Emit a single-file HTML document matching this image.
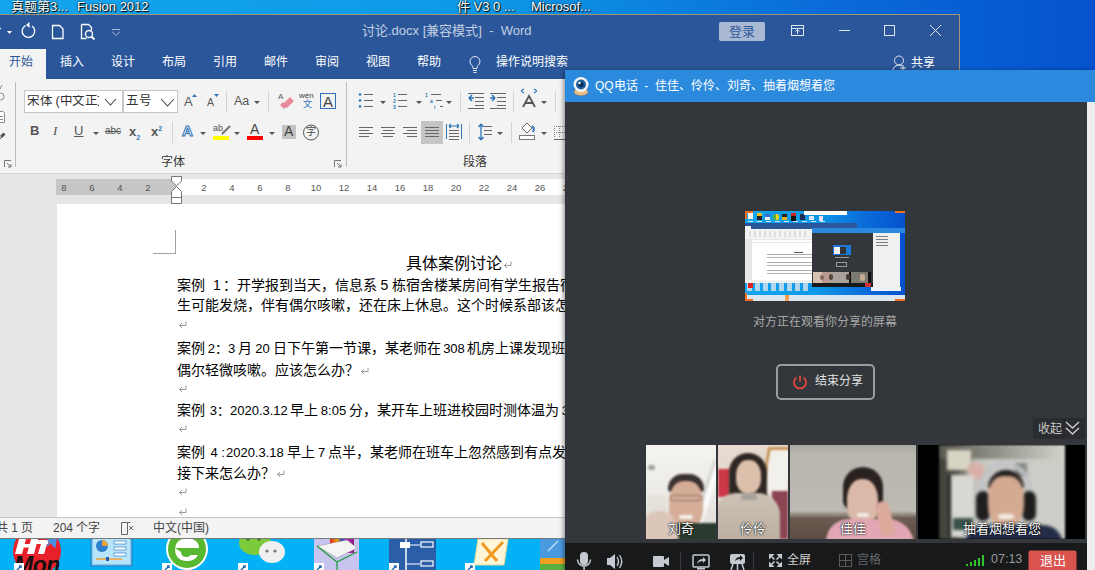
<!DOCTYPE html>
<html lang="zh-CN"><head><meta charset="utf-8">
<style>
*{margin:0;padding:0;box-sizing:border-box}
html,body{width:1095px;height:570px;overflow:hidden}
body{position:relative;font-family:"Liberation Sans",sans-serif;background:linear-gradient(90deg,#14a6ee 0%,#0d98e6 45%,#0a6cd9 75%,#0552cf 100%)}
.a{position:absolute}
.t{position:absolute;white-space:nowrap;line-height:1}
/* desktop labels */
.dl{color:#fff;font-size:13px;text-shadow:0 0 2px #000,1px 1px 1px #000}
/* word */
#word{left:0;top:14px;width:960px;height:525px;background:#e6e6e6;border-top:1px solid #a09478;border-right:1px solid #a09478;border-bottom:1px solid #7a7a7a;overflow:hidden}
#wtitle{left:0;top:0;width:960px;height:65px;background:#2b579a}
.tab{color:#fff;font-size:12px;top:41px}
#ribbon{left:0;top:64px;width:960px;height:95px;background:#f3f3f3;border-bottom:1px solid #d5d5d5}
#ribbon > *{margin-top:-1px}
#ruler{left:56px;top:164px;width:520px;height:16px;background:#fff}
#page{left:57px;top:189px;width:520px;height:400px;background:#fff}
#status{left:0;top:502px;width:960px;height:21px;background:#f3f3f3;border-top:1px solid #c6c6c6}
.doc{font-size:14px;color:#000}
.rt{font-size:11px;color:#9a9a9a}
.doc b{display:inline-block;font-weight:normal;text-align:center;font-size:13px;vertical-align:baseline}
/* qq */
#qq{left:565px;top:70px;width:530px;height:500px;background:#eeeeee;box-shadow:-2px 0 4px rgba(0,0,0,.35)}
#qqt{left:0;top:0;width:530px;height:32px;background:#2b8ade}
.vid{overflow:hidden}
.vid > div, .vid > div > div{filter:blur(1.2px)}
.vn{font-size:13px;color:#fff;text-shadow:0 0 2px #000,0 0 1px #000}
#qqb{left:0;top:32px;width:522px;height:468px;background:#33363a}
i{display:inline-block;width:1em;font-style:normal;overflow:visible}
.ret{display:inline-block;vertical-align:baseline;margin-left:1px}
</style></head><body>
<!-- desktop labels -->
<div class="t dl" style="left:11px;top:0px"><i>真</i><i>题</i><i>第</i>3...</div>
<div class="t dl" style="left:77px;top:0px">Fusion 2012</div>
<div class="t dl" style="left:457px;top:0px"><i>件</i> V3 0 ...</div>
<div class="t dl" style="left:531px;top:0px">Microsof...</div>

<!-- desktop bottom icons -->
<div class="a" style="left:0;top:538px;width:565px;height:32px;background:#03b2f6"></div>
<svg class="a" style="left:0;top:539px" width="565" height="32">
  <!-- HTMon -->
  <circle cx="37" cy="12" r="24" fill="#e8202a"/>
  <path d="M19 0h7l-4 15h-7z M31 0h7l-4 15h-7z M21 5h12l-1 3.5h-12z M37 1h12l-1 4h-12z M41 5h6l-3 10h-6z" fill="#fff"/>
  <path d="M48 1l8-1-1 8z M47 7l5-5" fill="#4a90e0" stroke="#4a90e0" stroke-width="1.5"/>
  <text x="14" y="34" font-family="Liberation Sans" font-weight="bold" font-style="italic" font-size="23" fill="#111" letter-spacing="-0.5">Mon</text>
  <rect x="14" y="24" width="10" height="8" fill="#fff"/><path d="M17 31l4-4M19 27h2v2" stroke="#2a6ab0" stroke-width="1.5" fill="none"/>
  <!-- presentation -->
  <rect x="91" y="0" width="41" height="27" fill="#7ec8f0" stroke="#2a70b8"/>
  <rect x="93" y="0" width="37" height="25" fill="#b8e4fa"/>
  <circle cx="102" cy="7" r="6" fill="#2d7fd0"/><path d="M102 7v-6a6 6 0 0 1 6 6z" fill="#f0a030"/>
  <rect x="114" y="2" width="12" height="3" fill="#fff" stroke="#4a90d0" stroke-width=".8"/><rect x="114" y="8" width="12" height="3" fill="#fff" stroke="#4a90d0" stroke-width=".8"/><rect x="114" y="14" width="12" height="3" fill="#fff" stroke="#4a90d0" stroke-width=".8"/>
  <path d="M96 20h26" stroke="#f0a030" stroke-width="1.5"/><rect x="106" y="18" width="3" height="4" fill="#2060b0"/>
  <!-- 360 e -->
  <circle cx="187" cy="10" r="21" fill="#fff"/>
  <circle cx="187" cy="10" r="19" fill="#58b830"/>
  <path d="M175 9h24q0-9-12-10q-12 1-12 12q1 11 12 11q8 0 11-6h-7q-2 2-4 2q-6 0-6-5z" fill="#fff"/>
  <rect x="162" y="24" width="10" height="8" fill="#fff"/><path d="M165 31l4-4M167 27h2v2" stroke="#2a6ab0" stroke-width="1.5" fill="none"/>
  <!-- wechat -->
  <ellipse cx="255" cy="4" rx="16" ry="12" fill="#7ccb3a"/>
  <ellipse cx="272" cy="13" rx="13" ry="11" fill="#f0f0f0"/>
  <circle cx="248" cy="0" r="1.8" fill="#3a6a20"/><circle cx="259" cy="0" r="1.8" fill="#3a6a20"/>
  <circle cx="267" cy="12" r="1.6" fill="#777"/><circle cx="275" cy="12" r="1.6" fill="#777"/>
  <rect x="238" y="24" width="10" height="8" fill="#fff"/><path d="M241 31l4-4M243 27h2v2" stroke="#2a6ab0" stroke-width="1.5" fill="none"/>
  <!-- book -->
  <rect x="314" y="0" width="45" height="32" fill="#c8c4f0"/>
  <rect x="330" y="0" width="24" height="14" fill="url(#strp)"/>
  <path d="M317 7l20 12l20-10l-10-8z" fill="#f4f4f4" stroke="#888" stroke-width=".5"/>
  <path d="M317 7l20 16v9M337 23l20-10" stroke="#1a9a30" stroke-width="1.2" fill="none"/>
  <rect x="314" y="24" width="10" height="8" fill="#fff"/><path d="M317 31l4-4M319 27h2v2" stroke="#2a6ab0" stroke-width="1.5" fill="none"/>
  <!-- diagram -->
  <rect x="389" y="0" width="47" height="32" fill="#2a5ea8"/>
  <path d="M406 0v32" stroke="#fff" stroke-width="1.5"/>
  <rect x="400" y="3" width="10" height="6" fill="#fff"/><path d="M410 6h10M406 25h14" stroke="#fff" stroke-width="1.2"/>
  <rect x="421" y="3" width="12" height="5" fill="none" stroke="#fff" stroke-width="1.2"/><rect x="421" y="22" width="12" height="5" fill="none" stroke="#fff" stroke-width="1.2"/>
  <rect x="389" y="24" width="10" height="8" fill="#fff"/><path d="M392 31l4-4M394 27h2v2" stroke="#2a6ab0" stroke-width="1.5" fill="none"/>
  <!-- xmanager -->
  <path d="M478 0h30l-4 26h-30z" fill="#fdf6d8" stroke="#e8d890"/>
  <path d="M482 4l15 18M503 3l-18 19" stroke="#f09a20" stroke-width="3"/>
  <rect x="465" y="24" width="10" height="8" fill="#fff"/><path d="M468 31l4-4M470 27h2v2" stroke="#2a6ab0" stroke-width="1.5" fill="none"/>
  <!-- layered -->
  <path d="M540 24h25v8h-25z" fill="#5ab040"/><path d="M540 18h25v7h-25z" fill="#f0a020"/><path d="M540 0h25v19h-25z" fill="#4a9ae0"/>
  <path d="M548 12l10-10" stroke="#b8e0fa" stroke-width="1.5"/>
  <defs><linearGradient id="strp" x1="0" x2="1"><stop offset="0" stop-color="#e02020"/><stop offset=".3" stop-color="#f0a000"/><stop offset=".5" stop-color="#2040d0"/><stop offset=".7" stop-color="#c020c0"/><stop offset="1" stop-color="#8a2080"/></linearGradient></defs>
</svg>
<div id="word" class="a">
  <div id="wtitle" class="a">
    <svg class="a" style="left:0;top:0" width="960" height="65">
      <g fill="none" stroke="#fff" stroke-width="1.3">
        <path d="M-2 16.5 a3 3 0 0 1 3 -3"/>
        <path d="M32 11 A6.3 6.3 0 1 1 25.5 10.6"/>
        <path d="M52.5 10.5h7l3.5 3.5v9.5h-10.5z"/>
        <path d="M81.5 9.5h7l3 3v3M81.5 9.5v14h5"/>
        <circle cx="89" cy="19" r="3.5"/><path d="M91.5 21.5l3 3" stroke-width="1.8"/>
      </g>
      <path d="M7 16h5l-2.5 3z" fill="#fff"/>
      <path d="M26 10l3.5-3v6z" fill="#fff"/>
      <path d="M112 14.5h8M112 16.5l4 4l4-4" fill="none" stroke="#a8b8d4" stroke-width="1"/>
      <g fill="none" stroke="#dfe6f0" stroke-width="1">
        <rect x="791.5" y="10.5" width="12" height="10"/><path d="M791.5 13.5h12M797.5 19v-4M795.5 16.5l2-2l2 2"/>
        <path d="M839 15.5h11"/>
        <rect x="884.5" y="10.5" width="10" height="10"/>
        <path d="M930 10l11 11M941 10l-11 11"/>
        <circle cx="899" cy="45.5" r="4.5"/><path d="M892.5 56q1-5.5 6.5-6q2 0 3.5 1M903 50v6M900 53h6"/>
        <path d="M472 50.5a5 5 0 1 1 6 0q-1 1-1 3h-4q0-2-1-3zM473 55.5h4M473.5 57.5h3"/>
      </g>
    </svg>
    <div class="t" style="left:362px;top:9px;font-size:13px;color:#c3cfe2"><i>讨</i><i>论</i>.docx [<i>兼</i><i>容</i><i>模</i><i>式</i>]&nbsp; - &nbsp;Word</div>
    <div class="a" style="left:719px;top:7px;width:46px;height:19px;background:#abbad4;border-radius:2px"></div>
    <div class="t" style="left:729px;top:10px;font-size:13px;color:#2b579a"><i>登</i><i>录</i></div>
    <div class="a" style="left:0;top:34px;width:46px;height:31px;background:#f3f3f3"></div>
    <div class="t tab" style="left:9px;color:#2b579a"><i>开</i><i>始</i></div>
    <div class="t tab" style="left:60px"><i>插</i><i>入</i></div>
    <div class="t tab" style="left:111px"><i>设</i><i>计</i></div>
    <div class="t tab" style="left:162px"><i>布</i><i>局</i></div>
    <div class="t tab" style="left:213px"><i>引</i><i>用</i></div>
    <div class="t tab" style="left:264px"><i>邮</i><i>件</i></div>
    <div class="t tab" style="left:315px"><i>审</i><i>阅</i></div>
    <div class="t tab" style="left:366px"><i>视</i><i>图</i></div>
    <div class="t tab" style="left:417px"><i>帮</i><i>助</i></div>
    <div class="t tab" style="left:496px"><i>操</i><i>作</i><i>说</i><i>明</i><i>搜</i><i>索</i></div>
    <div class="t tab" style="left:911px;top:42px"><i>共</i><i>享</i></div>
  </div>
  <div id="ribbon" class="a">
    <svg class="a" style="left:0;top:0" width="960" height="94">
      <g fill="#d3d3d3"><rect x="15" y="4" width="1" height="85" fill="#bcbcbc"/><rect x="346" y="4" width="1" height="85" fill="#bcbcbc"/><rect x="226" y="13" width="1" height="21"/><rect x="268" y="13" width="1" height="21"/><rect x="172" y="44" width="1" height="21"/><rect x="460" y="13" width="1" height="21"/><rect x="513" y="13" width="1" height="21"/><rect x="555" y="13" width="1" height="21"/><rect x="469" y="44" width="1" height="21"/><rect x="511" y="44" width="1" height="21"/></g>
      <!-- left clipboard partial icons -->
      <g stroke="#8a8a8a" fill="none" stroke-width="1"><circle cx="0.5" cy="18.5" r="3.5"/><path d="M0 11 L2 7"/><path d="M-3 33.5h6l1.5 1.5v9.5h-7.5z" fill="#fff"/><path d="M0 38.5h3M0 41.5h3"/></g>
      <path d="M0 58 L3.5 54.5 L5.5 56.5 L2 60 Z" fill="#555"/><path d="M0 61 L2 59" stroke="#555"/>
      <!-- font box -->
      <rect x="24.5" y="12.5" width="98" height="22" fill="#fff" stroke="#c6c6c6"/>
      <rect x="123.5" y="12.5" width="54" height="22" fill="#fff" stroke="#c6c6c6"/>
      <path d="M105 21 L110.5 27 L116 21" fill="none" stroke="#444" stroke-width="1.1"/>
      <path d="M161 21 L167.5 28 L174 21" fill="none" stroke="#444" stroke-width="1.1"/>
      <!-- grow/shrink -->
      <path d="M192 19 L194.5 16 L197 19Z M214 16 L219 16 L216.5 19Z" fill="#2e75b6"/>
      <!-- arrows -->
      <g fill="#555"><path d="M254 23h6l-3 3z"/><path d="M93 54h6l-3 3z"/><path d="M200 54h6l-3 3z"/><path d="M234 54h6l-3 3z"/><path d="M269 54h6l-3 3z"/>
      <path d="M380 23h6l-3 3z"/><path d="M416 23h6l-3 3z"/><path d="M446 23h6l-3 3z"/><path d="M541 23h6l-3 3z"/><path d="M497 54h6l-3 3z"/><path d="M541 54h6l-3 3z"/></g>
      <!-- eraser -->
      <path d="M283 26 L290 19 L294 23 L287 30 Z" fill="#e8899a"/><path d="M280 27 L283 24 L287 28 L284 31Z" fill="#e8899a"/>
      <!-- boxed A -->
      <rect x="320.5" y="15.5" width="15" height="15" fill="none" stroke="#2e6fba"/>
      <!-- highlight / font color bars -->
      <rect x="213" y="58" width="16" height="4" fill="#ffff00"/>
      <path d="M222 56 L230 48" stroke="#777" stroke-width="2.2"/>
      <rect x="247" y="58" width="16" height="4" fill="#ff0000"/>
      <rect x="282" y="47" width="14" height="14" fill="#c3c3c3"/>
      <circle cx="311" cy="54.5" r="7.5" fill="none" stroke="#555"/>
      <!-- bullets -->
      <g fill="#2e75b6"><circle cx="360" cy="16.5" r="1.3"/><circle cx="360" cy="22.5" r="1.3"/><circle cx="360" cy="28.5" r="1.3"/></g>
      <g stroke="#666" stroke-width="1"><path d="M364 16.5h9M364 22.5h9M364 28.5h9"/><path d="M398 16.5h9M398 22.5h9M398 28.5h9"/><path d="M431 16.5h10M436 22.5h6M440 28.5h3"/></g>
      <g fill="#2e75b6" font-size="5" font-family="Liberation Sans" font-weight="bold"><text x="393" y="19">1</text><text x="393" y="25">2</text><text x="393" y="31">3</text><text x="425" y="19">1</text><text x="430" y="25">a</text><text x="434" y="31">i</text></g>
      <!-- indent -->
      <g stroke="#666" stroke-width="1"><path d="M468 15.5h16M475 19.5h9M475 23.5h9M475 27.5h9M468 30.5h16"/><path d="M490 15.5h16M497 19.5h9M497 23.5h9M497 27.5h9M490 30.5h16"/></g>
      <path d="M474 20h-5M469 20l3-3M469 20l3 3" stroke="#2e75b6" stroke-width="1.6" fill="none"/>
      <path d="M490 20h5M495 20l-3-3M495 20l-3 3" stroke="#2e75b6" stroke-width="1.6" fill="none"/>
      <!-- asian layout -->
      <path d="M523 29 L529 18 L535 29 M525 25h8" stroke="#555" stroke-width="1.8" fill="none"/>
      <path d="M521 13 l3-2 M521 13 l3 2 M537 13 l-3-2 M537 13 l-3 2" stroke="#2e75b6" stroke-width="1.2" fill="none"/>
      <!-- align -->
      <rect x="421" y="43" width="22" height="23" fill="#c5c5c5"/>
      <g stroke="#666" stroke-width="1">
        <path d="M359 49.5h14M359 52.5h10M359 55.5h14M359 58.5h10"/>
        <path d="M381 49.5h14M383 52.5h10M381 55.5h14M383 58.5h10"/>
        <path d="M403 49.5h14M407 52.5h10M403 55.5h14M407 58.5h10"/>
        <path d="M425 49.5h14M425 52.5h14M425 55.5h14M425 58.5h14"/>
        <path d="M449 52.5h10M449 55.5h10M449 58.5h10M449 61.5h10"/>
        <path d="M484 48.5h8M484 52.5h8M484 56.5h8"/>
      </g>
      <path d="M446.5 46v15M461.5 46v15" stroke="#2e75b6" stroke-width="1"/>
      <path d="M449 48h10M449 48l2-2M449 48l2 2M459 48l-2-2M459 48l-2 2" stroke="#2e75b6" stroke-width="1.2" fill="none"/>
      <path d="M481 46v16M481 46l-2.5 3M481 46l2.5 3M481 62l-2.5-3M481 62l2.5-3" stroke="#2e75b6" stroke-width="1.3" fill="none"/>
      <!-- shading -->
      <rect x="519.5" y="57.5" width="15" height="4" fill="#fff" stroke="#777"/>
      <path d="M522 50 L527 45 L532 50 L527 55 Z" fill="#fff" stroke="#666"/>
      <path d="M532 48 q3 2 1 6" stroke="#2e75b6" stroke-width="2" fill="none"/>
      <path d="M554 61.5h11" stroke="#666"/>
      <path d="M554.5 48v12M559.5 48v12M554 48.5h11M554 54.5h11" stroke="#888" stroke-dasharray="1 1" fill="none"/>
      <!-- dialog launchers -->
      <path d="M4.5 89V82.5H11M7 85l4 4M11 86v3H8" stroke="#777" fill="none"/>
      <path d="M334.5 89V82.5H341M337 85l4 4M341 86v3H338" stroke="#777" fill="none"/>
    </svg>
    <div class="t" style="left:27px;top:17px;width:72px;overflow:hidden;font-size:12.5px;color:#333"><i>宋</i><i>体</i> (<i>中</i><i>文</i><i>正</i><i>文</i></div>
    <div class="t" style="left:126px;top:17px;font-size:12.5px;color:#333"><i>五</i><i>号</i></div>
    <div class="t" style="left:184px;top:17px;font-size:13px;color:#555">A</div>
    <div class="t" style="left:207px;top:19px;font-size:10.5px;color:#555">A</div>
    <div class="t" style="left:234px;top:17px;font-size:12.5px;color:#555">Aa</div>
    <div class="t" style="left:278px;top:15px;font-size:8px;color:#555">A</div>
    <div class="t" style="left:299px;top:14px;font-size:8px;color:#444">wén</div>
    <div class="t" style="left:303px;top:22px;font-size:9px;color:#2e75b6"><i>文</i></div>
    <div class="t" style="left:323px;top:16px;font-size:15px;color:#444">A</div>
    <div class="t" style="left:30px;top:46px;font-size:13px;color:#555;font-weight:bold">B</div>
    <div class="t" style="left:53px;top:46px;font-size:13px;color:#555;font-style:italic;font-family:'Liberation Serif'">I</div>
    <div class="t" style="left:74px;top:46px;font-size:13px;color:#555;text-decoration:underline">U</div>
    <div class="t" style="left:105px;top:48px;font-size:10px;color:#555;text-decoration:line-through">abc</div>
    <div class="t" style="left:129px;top:47px;font-size:13px;color:#555;font-weight:bold">x<sub style="font-size:7px;color:#2e75b6">2</sub></div>
    <div class="t" style="left:151px;top:47px;font-size:13px;color:#555;font-weight:bold">x<sup style="font-size:7px;color:#2e75b6">2</sup></div>
    <div class="t" style="left:182px;top:45px;font-size:15px;color:#fff;-webkit-text-stroke:1px #2e75b6;font-weight:bold">A</div>
    <div class="t" style="left:213px;top:46px;font-size:9px;color:#555">ab</div>
    <div class="t" style="left:250px;top:44px;font-size:14px;color:#444">A</div>
    <div class="t" style="left:284px;top:46px;font-size:14px;color:#444">A</div>
    <div class="t" style="left:306px;top:49px;font-size:10px;color:#444"><i>字</i></div>
    <div class="t" style="left:161px;top:78px;font-size:12px;color:#333"><i>字</i><i>体</i></div>
    <div class="t" style="left:463px;top:78px;font-size:12px;color:#333"><i>段</i><i>落</i></div>
  </div>
  <div id="ruler" class="a" style="left:56px;top:164px;width:520px;height:16px;background:#fff">
    <div class="a" style="left:0;top:0;width:120px;height:16px;background:#c6c6c6"></div>
    <svg class="a" style="left:0;top:-4px" width="520" height="30">
      <g font-family="Liberation Sans" font-size="9.5" fill="#555" text-anchor="middle">
        <text x="8" y="16">8</text><text x="36" y="16">6</text><text x="64" y="16">4</text><text x="92" y="16">2</text>
        <text x="148" y="16">2</text><text x="176" y="16">4</text><text x="204" y="16">6</text><text x="232" y="16">8</text><text x="260" y="16">10</text><text x="288" y="16">12</text><text x="316" y="16">14</text><text x="344" y="16">16</text><text x="372" y="16">18</text><text x="400" y="16">20</text><text x="428" y="16">22</text><text x="456" y="16">24</text><text x="484" y="16">26</text><text x="512" y="16">28</text>
      </g>
      <path d="M115.5 1.5h10v4.5l-5 5l-5-5z" fill="#fff" stroke="#777"/>
      <path d="M120.5 11.5l5 5v12h-10v-12z" fill="#fff" stroke="#777"/>
      <path d="M115.5 22.5h10" stroke="#777"/>
    </svg>
  </div>
  <div id="page" class="a" style="left:57px;top:189px;width:520px;height:320px;background:#fff">
    <div class="a" style="left:118px;top:26px;width:1px;height:24px;background:#a0a0a0"></div>
    <div class="a" style="left:96px;top:49px;width:23px;height:1px;background:#a0a0a0"></div>
    <div class="t doc" style="left:120px;top:74px"><i>案</i><i>例</i><b style="width:18px;text-align:left;padding-left:8px;font-size:14px">1</b><i>：</i><i>开</i><i>学</i><i>报</i><i>到</i><i>当</i><i>天</i><i>，</i><i>信</i><i>息</i><i>系</i><b style="width:15px;font-size:14px">5</b><i>栋</i><i>宿</i><i>舍</i><i>楼</i><i>某</i><i>房</i><i>间</i><i>有</i><i>学</i><i>生</i><i>报</i><i>告</i><i>宿</i><i>舍</i><i>有</i><i>学</i><i>生</i></div>
    <div class="t doc" style="left:120px;top:94px"><i>生</i><i>可</i><i>能</i><i>发</i><i>烧</i><i>，</i><i>伴</i><i>有</i><i>偶</i><i>尔</i><i>咳</i><i>嗽</i><i>，</i><i>还</i><i>在</i><i>床</i><i>上</i><i>休</i><i>息</i><i>。</i><i>这</i><i>个</i><i>时</i><i>候</i><i>系</i><i>部</i><i>该</i><i>怎</i><i>么</i><i>办</i></div>
    <div class="t doc" style="left:120px;top:137px"><i>案</i><i>例</i><b style="width:33px">2<i>：</i>3</b><i>月</i><b style="width:21px">20</b><i>日</i><i>下</i><i>午</i><i>第</i><i>一</i><i>节</i><i>课</i><i>，</i><i>某</i><i>老</i><i>师</i><i>在</i><b style="width:26px">308</b><i>机</i><i>房</i><i>上</i><i>课</i><i>发</i><i>现</i><i>班</i><i>上</i></div>
    <div class="t doc" style="left:120px;top:159px"><i>偶</i><i>尔</i><i>轻</i><i>微</i><i>咳</i><i>嗽</i><i>。</i><i>应</i><i>该</i><i>怎</i><i>么</i><i>办</i><i>？</i><span class="rt"><svg class="ret" width="9" height="8" viewBox="0 0 9 8"><path d="M8 0.5v4H1.5M1.5 4.5l2.5-2.5M1.5 4.5l2.5 2.5" fill="none" stroke="currentColor" stroke-width="1"/></svg></span></div>
    <div class="t doc" style="left:120px;top:199px"><i>案</i><i>例</i><b style="width:25px;text-align:right">3<i>：</i></b><b style="width:56px">2020.3.12</b><b style="width:4px"></b><i>早</i><i>上</i><b style="width:31px">8:05</b><i>分</i><i>，</i><i>某</i><i>开</i><i>车</i><i>上</i><i>班</i><i>进</i><i>校</i><i>园</i><i>时</i><i>测</i><i>体</i><i>温</i><i>为</i><b style="width:20px">37</b></div>
    <div class="t doc" style="left:120px;top:241px"><i>案</i><i>例</i><b style="width:21px;text-align:right;padding-right:1px">4 :</b><b style="width:56px">2020.3.18</b><b style="width:5px"></b><i>早</i><i>上</i><b style="width:13px">7</b><i>点</i><i>半</i><i>，</i><i>某</i><i>老</i><i>师</i><i>在</i><i>班</i><i>车</i><i>上</i><i>忽</i><i>然</i><i>感</i><i>到</i><i>有</i><i>点</i><i>发</i><i>烧</i></div>
    <div class="t doc" style="left:120px;top:262px"><i>接</i><i>下</i><i>来</i><i>怎</i><i>么</i><i>办</i><i>？</i><span class="rt"><svg class="ret" width="9" height="8" viewBox="0 0 9 8"><path d="M8 0.5v4H1.5M1.5 4.5l2.5-2.5M1.5 4.5l2.5 2.5" fill="none" stroke="currentColor" stroke-width="1"/></svg></span></div>
    <div class="t rt" style="left:120px;top:116px"><svg class="ret" width="9" height="8" viewBox="0 0 9 8"><path d="M8 0.5v4H1.5M1.5 4.5l2.5-2.5M1.5 4.5l2.5 2.5" fill="none" stroke="currentColor" stroke-width="1"/></svg></div>
    <div class="t rt" style="left:120px;top:180px"><svg class="ret" width="9" height="8" viewBox="0 0 9 8"><path d="M8 0.5v4H1.5M1.5 4.5l2.5-2.5M1.5 4.5l2.5 2.5" fill="none" stroke="currentColor" stroke-width="1"/></svg></div>
    <div class="t rt" style="left:120px;top:220px"><svg class="ret" width="9" height="8" viewBox="0 0 9 8"><path d="M8 0.5v4H1.5M1.5 4.5l2.5-2.5M1.5 4.5l2.5 2.5" fill="none" stroke="currentColor" stroke-width="1"/></svg></div>
    <div class="t rt" style="left:120px;top:283px"><svg class="ret" width="9" height="8" viewBox="0 0 9 8"><path d="M8 0.5v4H1.5M1.5 4.5l2.5-2.5M1.5 4.5l2.5 2.5" fill="none" stroke="currentColor" stroke-width="1"/></svg></div>
    <div class="t rt" style="left:120px;top:303px"><svg class="ret" width="9" height="8" viewBox="0 0 9 8"><path d="M8 0.5v4H1.5M1.5 4.5l2.5-2.5M1.5 4.5l2.5 2.5" fill="none" stroke="currentColor" stroke-width="1"/></svg></div>
    <div class="t" style="left:349px;top:52px;font-size:16px;color:#000"><i>具</i><i>体</i><i>案</i><i>例</i><i>讨</i><i>论</i><span class="rt"><svg class="ret" width="9" height="8" viewBox="0 0 9 8"><path d="M8 0.5v4H1.5M1.5 4.5l2.5-2.5M1.5 4.5l2.5 2.5" fill="none" stroke="currentColor" stroke-width="1"/></svg></span></div>
  </div>
  <div id="status" class="a">
    <div class="t" style="left:-4px;top:4px;font-size:12px;color:#444"><i>共</i> 1 <i>页</i></div>
    <div class="t" style="left:53px;top:4px;font-size:12px;color:#444">204 <i>个</i><i>字</i></div>
    <svg class="a" style="left:120px;top:3px" width="16" height="15"><path d="M1.5 1.5h6v12h-6z M7.5 1.5h3" fill="none" stroke="#666"/><path d="M9 5l4 4M13 5l-4 4" stroke="#666"/></svg>
    <div class="t" style="left:153px;top:4px;font-size:12px;color:#444"><i>中</i><i>文</i>(<i>中</i><i>国</i>)</div>
  </div>
</div>

<div id="qq" class="a">
  <div id="qqt" class="a">
    <svg class="a" style="left:7px;top:6px" width="18" height="20">
      <ellipse cx="9" cy="16" rx="7" ry="3.5" fill="#e8c090" stroke="#b08050" stroke-width=".6"/>
      <circle cx="9" cy="8.5" r="7.5" fill="#f4f4f4"/>
      <circle cx="9" cy="8.5" r="5" fill="#1f5fa0"/>
      <circle cx="9" cy="8.5" r="2.6" fill="#0a2a50"/>
      <circle cx="7.5" cy="7" r="1.2" fill="#fff"/>
    </svg>
    <div class="t" style="left:30px;top:10px;font-size:12px;color:#fff">QQ<i>电</i><i>话</i> &nbsp;- &nbsp;<i>佳</i><i>佳</i><i>、</i><i>伶</i><i>伶</i><i>、</i><i>刘</i><i>奇</i><i>、</i><i>抽</i><i>着</i><i>烟</i><i>想</i><i>着</i><i>您</i></div>
  </div>
  <div id="qqb" class="a">
    <!-- thumbnail at abs 745,211 -> rel 180,109 -->
    <div class="a" style="left:180px;top:109px;width:160px;height:90px;background:linear-gradient(90deg,#14a6ee 0%,#0d98e6 45%,#0a6cd9 75%,#0552cf 100%);overflow:hidden;filter:blur(0.35px)">
      <div class="a" style="left:3px;top:2px;width:5px;height:6px;background:#f4f4f4"></div><div class="a" style="left:12px;top:2px;width:5px;height:7px;background:linear-gradient(#f0c020 0 50%,#222 50%)"></div><div class="a" style="left:20px;top:3px;width:5px;height:6px;background:linear-gradient(#3070d0 0 50%,#f0f0f0 50%)"></div><div class="a" style="left:28px;top:3px;width:6px;height:6px;background:linear-gradient(90deg,#60b040 0 50%,#f0d020 50%);border-radius:2px"></div><div class="a" style="left:37px;top:3px;width:5px;height:6px;background:linear-gradient(#222 0 50%,#e0b020 50%)"></div><div class="a" style="left:46px;top:2px;width:5px;height:8px;background:linear-gradient(#d02020 0 40%,#111 40%)"></div><div class="a" style="left:55px;top:3px;width:5px;height:6px;background:#203050"></div><div class="a" style="left:64px;top:5px;width:5px;height:4px;background:#d8e8f8"></div><div class="a" style="left:74px;top:5px;width:4px;height:5px;background:#e8e0f0"></div><div class="a" style="left:3px;top:10px;width:80px;height:1px;background:repeating-linear-gradient(90deg,#cfe6f6 0 5px,transparent 5px 9px)"></div><div class="a" style="left:59px;top:0;width:43px;height:4px;background:#fff"></div>
      <div class="a" style="left:0;top:0;width:8px;height:8px;border-left:2px solid #f07020;border-top:2px solid #f07020"></div>
      <div class="a" style="left:150px;top:0;width:10px;height:2px;background:#f07020"></div>
      <div class="a" style="left:0;top:12px;width:112px;height:6px;background:#2b579a"></div>
      <div class="a" style="left:0;top:15px;width:6px;height:3px;background:#f3f3f3"></div>
      <div class="a" style="left:0;top:18px;width:67px;height:10px;background:#f3f3f3"></div>
      <div class="a" style="left:4px;top:20px;width:60px;height:6px;background:repeating-linear-gradient(90deg,#aaa 0 2px,transparent 2px 5px);opacity:.3"></div>
      <div class="a" style="left:0;top:28px;width:67px;height:42px;background:#e6e6e6"></div>
      <div class="a" style="left:7px;top:29px;width:60px;height:2px;background:#fff"></div>
      <div class="a" style="left:7px;top:32px;width:60px;height:38px;background:#fff"></div>
      <div class="a" style="left:49px;top:41px;width:9px;height:1px;background:#555"></div>
      <div class="a" style="left:22px;top:43px;width:45px;height:22px;background:repeating-linear-gradient(180deg,#666 0 1px,transparent 1px 3px,#777 3px 4px,transparent 4px 8px);opacity:.55"></div>
      <div class="a" style="left:0;top:69px;width:67px;height:3px;background:#f0f0f0"></div>
      <div class="a" style="left:2px;top:72px;width:64px;height:8px;background:repeating-linear-gradient(90deg,#d8e4f0 0 5px,transparent 5px 8px);opacity:.8"></div>
      <div class="a" style="left:3px;top:72px;width:5px;height:5px;background:#e02020"></div>
      <div class="a" style="left:67px;top:17px;width:93px;height:5px;background:#2b88de"></div>
      <div class="a" style="left:67px;top:22px;width:61px;height:54px;background:#33363a"></div>
      <div class="a" style="left:88px;top:34px;width:18px;height:10px;background:#1a78d8"></div>
      <div class="a" style="left:89px;top:36px;width:6px;height:7px;background:#f0f0f0"></div>
      <div class="a" style="left:95px;top:36px;width:6px;height:7px;background:#333"></div>
      <div class="a" style="left:90px;top:46px;width:14px;height:1px;background:#999"></div>
      <div class="a" style="left:91px;top:51px;width:11px;height:5px;border:1px solid #999"></div>
      <div class="a" style="left:68px;top:61px;width:58px;height:11px;background:linear-gradient(90deg,#d8c0b0 0 16%,#b89a90 16% 30%,#a8a49c 30% 62%,#111 62% 66%,#7a7a70 66% 94%,#111 94%)"></div><div class="a" style="left:75px;top:64px;width:4px;height:5px;background:#8a6a5a;border-radius:2px"></div><div class="a" style="left:84px;top:63px;width:4px;height:6px;background:#5a4a40;border-radius:2px"></div><div class="a" style="left:101px;top:63px;width:4px;height:6px;background:#4a3a34;border-radius:2px"></div><div class="a" style="left:115px;top:63px;width:5px;height:7px;background:#c8a890;border-radius:2px"></div>
      <div class="a" style="left:67px;top:72px;width:61px;height:4px;background:#18191a"></div>
      <div class="a" style="left:120px;top:72px;width:6px;height:4px;background:#d03030"></div>
      <div class="a" style="left:128px;top:22px;width:27px;height:54px;background:#f0f0f0"></div>
      <div class="a" style="left:131px;top:25px;width:12px;height:12px;background:repeating-linear-gradient(180deg,#333 0 1px,transparent 1px 3px);opacity:.6"></div>
      <div class="a" style="left:126px;top:76px;width:30px;height:4px;background:#eef2f6"></div>
      <div class="a" style="left:0;top:84px;width:160px;height:6px;background:#dde6ee"></div>
      <div class="a" style="left:40px;top:84px;width:4px;height:6px;background:#f4a050"></div>
      <div class="a" style="left:0;top:82px;width:8px;height:8px;border-left:2px solid #f07020;border-bottom:2px solid #f07020"></div>
      <div class="a" style="left:150px;top:88px;width:10px;height:2px;background:#f07020"></div>
    </div>
    <div class="t" style="left:188px;top:214px;font-size:12px;color:#a8a8a8"><i>对</i><i>方</i><i>正</i><i>在</i><i>观</i><i>看</i><i>你</i><i>分</i><i>享</i><i>的</i><i>屏</i><i>幕</i></div>
    <div class="a" style="left:211px;top:262px;width:99px;height:36px;border:2px solid #9c9c9c;border-radius:5px"></div>
    <svg class="a" style="left:227px;top:272px" width="16" height="16"><path d="M4.2 3.8 A6 6 0 1 0 11.8 3.8" fill="none" stroke="#e2463f" stroke-width="1.8"/><path d="M8 1.5v6" stroke="#e2463f" stroke-width="1.8"/></svg>
    <div class="t" style="left:250px;top:273px;font-size:12px;color:#e2e2e2"><i>结</i><i>束</i><i>分</i><i>享</i></div>
    <!-- collapse -->
    <div class="a" style="left:468px;top:316px;width:52px;height:21px;background:#2a2c2f"></div>
    <div class="t" style="left:473px;top:321px;font-size:12px;color:#c8c8c8"><i>收</i><i>起</i></div>
    <svg class="a" style="left:499px;top:318px" width="17" height="17"><path d="M2 2l6.5 6l6.5-6M2 8l6.5 6l6.5-6" fill="none" stroke="#c8c8c8" stroke-width="1.5"/></svg>
  </div>
  <!-- videos -->
  <div class="a vid" style="left:81px;top:375px;width:70px;height:94px;background:linear-gradient(180deg,#f4f3f0 0%,#eceae6 55%,#dedad4 100%)">
    <div class="a" style="left:58px;top:14px;width:6px;height:80px;background:#fafafa;transform:rotate(18deg);box-shadow:-2px 0 3px #c8c8c4"></div>
    <div class="a" style="left:2px;top:20px;width:7px;height:5px;background:#a0a0a0;border-radius:3px"></div>
    <div class="a" style="left:2px;top:50px;width:18px;height:20px;background:#e4e0da"></div>
    <div class="a" style="left:22px;top:29px;width:36px;height:18px;background:#3a3230;border-radius:18px 18px 4px 4px"></div>
    <div class="a" style="left:23px;top:36px;width:34px;height:48px;background:#d6ae98;border-radius:42% 42% 40% 40%"></div>
    <div class="a" style="left:24px;top:50px;width:32px;height:6px;border:1px solid #6a5a50;border-radius:3px;opacity:.7"></div>
    <div class="a" style="left:33px;top:70px;width:14px;height:4px;background:#f6f2ee;border-radius:2px"></div>
    <div class="a" style="left:20px;top:78px;width:54px;height:20px;background:#2a3a2e;border-radius:16px 0 0 0"></div>
    <div class="a" style="left:-4px;top:66px;width:34px;height:32px;background:#dcc6b8;border-radius:16px 16px 0 0;transform:rotate(-12deg)"></div>
  </div>
  <div class="a vid" style="left:153px;top:375px;width:70px;height:94px;background:linear-gradient(180deg,#e8dcd2 0%,#ddd0c6 100%)">
    <div class="a" style="left:46px;top:2px;width:26px;height:46px;background:#f2f0ea;border-left:3px solid #c8945c;border-top:3px solid #c8945c;transform:skewX(-10deg)"></div>
    <div class="a" style="left:0px;top:24px;width:12px;height:28px;background:#cc3848"></div>
    <div class="a" style="left:54px;top:46px;width:16px;height:48px;background:#8a4452"></div>
    <div class="a" style="left:11px;top:8px;width:38px;height:50px;background:#2e2622;border-radius:19px 19px 4px 4px"></div>
    <div class="a" style="left:18px;top:15px;width:25px;height:34px;background:#dcc0ac;border-radius:45%"></div>
    <div class="a" style="left:-2px;top:48px;width:64px;height:48px;background:linear-gradient(180deg,#cdc2b6,#bcb0a2);border-radius:20px 22px 0 0"></div>
    <div class="a" style="left:23px;top:49px;width:16px;height:6px;background:#a4a29a;border-radius:3px"></div>
  </div>
  <div class="a vid" style="left:225px;top:375px;width:126px;height:94px;background:linear-gradient(180deg,#a8a8a2 0%,#b8b6ae 10%,#bcbab2 70%,#6a5c50 78%,#5a4c42 100%)">
    <div class="a" style="left:53px;top:22px;width:40px;height:42px;background:#2a2220;border-radius:20px 20px 8px 8px"></div>
    <div class="a" style="left:57px;top:34px;width:31px;height:46px;background:#dcb8a8;border-radius:45% 45% 42% 42%"></div>
    <div class="a" style="left:67px;top:68px;width:12px;height:4px;background:#f2ece8;border-radius:2px"></div>
    <div class="a" style="left:36px;top:74px;width:88px;height:26px;background:#e2a6b4;border-radius:26px 30px 0 0"></div>
    <div class="a" style="left:88px;top:56px;width:14px;height:36px;background:#dcaa9c;border-radius:7px;transform:rotate(-14deg)"></div>
  </div>
  <div class="a vid" style="left:353px;top:375px;width:167px;height:94px;background:#000">
    <div class="a" style="left:21px;top:0;width:126px;height:94px;background:linear-gradient(90deg,#3c3e38 0%,#55564e 14%,#c8c8c2 30%,#cfcfca 100%);overflow:hidden">
      <div class="a" style="left:0;top:0;width:126px;height:14px;background:linear-gradient(90deg,#5a5a50,#d4d4cc)"></div>
      <div class="a" style="left:8px;top:5px;width:24px;height:20px;background:#d8d4c4"></div>
      <div class="a" style="left:28px;top:17px;width:18px;height:18px;background:#d8b0a8;border-radius:50%"></div>
      <div class="a" style="left:9px;top:30px;width:26px;height:62px;background:#d8d8d2;border-left:3px solid #222"></div>
      <div class="a" style="left:14px;top:73px;width:20px;height:12px;background:#3a5048"></div>
      <div class="a" style="left:76px;top:18px;width:12px;height:14px;background:#888"></div>
      <div class="a" style="left:40px;top:17px;width:52px;height:34px;border:4px solid #c0c4c8;border-bottom:none;border-radius:26px 26px 0 0"></div>
      <div class="a" style="left:37px;top:46px;width:14px;height:30px;background:#1e1e1e;border-radius:7px"></div>
      <div class="a" style="left:83px;top:46px;width:14px;height:30px;background:#1e1e1e;border-radius:7px"></div>
      <div class="a" style="left:49px;top:25px;width:36px;height:18px;background:#1e1c1c;border-radius:18px 18px 0 0"></div>
      <div class="a" style="left:49px;top:31px;width:36px;height:52px;background:#d4aa90;border-radius:40% 40% 45% 45%"></div>
      <div class="a" style="left:59px;top:69px;width:16px;height:5px;background:#f4f0ea;border-radius:3px"></div>
      <div class="a" style="left:26px;top:80px;width:98px;height:20px;background:#242c48;border-radius:20px 20px 0 0"></div>
    </div>
  </div>
  <div class="t vn" style="left:103px;top:452px"><i>刘</i><i>奇</i></div>
  <div class="t vn" style="left:175px;top:452px"><i>伶</i><i>伶</i></div>
  <div class="t vn" style="left:275px;top:452px"><i>佳</i><i>佳</i></div>
  <div class="t vn" style="left:398px;top:452px"><i>抽</i><i>着</i><i>烟</i><i>想</i><i>着</i><i>您</i></div>
  <!-- toolbar -->
  <div class="a" style="left:0;top:473px;width:522px;height:27px;background:#18191b">
    <svg class="a" style="left:0;top:0" width="522" height="27">
      <g fill="#c5cad2" stroke="none">
        <rect x="15" y="9" width="8" height="13" rx="4"/>
        <path d="M12.5 16.5 a6.5 6.5 0 0 0 13 0" fill="none" stroke="#c5cad2" stroke-width="1.5"/>
        <rect x="18.3" y="23" width="1.5" height="4"/>
        <path d="M42 15h3l5-4v15l-5-4h-3z"/>
        <path d="M52 14 q3 4.5 0 9 M54.5 12 q4.5 6.5 0 13" fill="none" stroke="#c5cad2" stroke-width="1.3"/>
        <rect x="88" y="13" width="11" height="11" rx="1"/>
        <path d="M99 17l5-3v9l-5-3z"/>
        <rect x="128" y="12" width="16" height="12" rx="1" fill="none" stroke="#c5cad2" stroke-width="1.5"/>
        <path d="M132 21 q1-5 6-5v-2l3 3l-3 3v-2q-4 0-6 3z"/>
        <rect x="132" y="25" width="8" height="1.5"/>
        <rect x="165" y="11" width="15" height="10" rx="2"/>
        <path d="M168 21l-2 6M177 21l2 6M172.5 21v6" stroke="#c5cad2" stroke-width="1.5"/>
        <path d="M204 11h5.5l-5.5 5.5zM217 11h-5.5l5.5 5.5zM204 24h5.5l-5.5-5.5zM217 24h-5.5l5.5-5.5z"/>
        <path d="M205.5 12.5l4 4M215.5 12.5l-4 4M205.5 22.5l4-4M215.5 22.5l-4-4" stroke="#c5cad2" stroke-width="1.6"/>
      </g>
      <path d="M170 18 q1-4 5-4v-2l3 3l-3 3v-2q-3 0-5 2z" fill="#18191b"/>
      <g fill="#3a3b3e"><rect x="115" y="9" width="1" height="18"/><rect x="188" y="9" width="1" height="18"/></g>
      <rect x="274.5" y="11.5" width="12" height="12" fill="none" stroke="#5a5a5a"/><path d="M280.5 11.5v12M274.5 17.5h12" stroke="#5a5a5a"/>
      <g fill="#2ec52e"><rect x="401" y="21" width="2" height="2"/><rect x="405" y="19" width="2" height="4"/><rect x="409" y="17" width="2" height="6"/><rect x="413" y="15" width="2" height="8"/><rect x="417" y="12" width="2" height="11"/></g>
      <path d="M463.5 27V9.5q0-2 2-2h44q2 0 2 2V27z" fill="#d9534f"/>
    </svg>
    <div class="t" style="left:222px;top:11px;font-size:12px;color:#d0d0d0"><i>全</i><i>屏</i></div>
    <div class="t" style="left:292px;top:11px;font-size:12px;color:#666"><i>宫</i><i>格</i></div>
    <div class="t" style="left:426px;top:10px;font-size:12.5px;color:#9a9a9a">07:13</div>
    <div class="t" style="left:475px;top:11px;font-size:13px;color:#fff"><i>退</i><i>出</i></div>
  </div>
</div>
</body></html>
